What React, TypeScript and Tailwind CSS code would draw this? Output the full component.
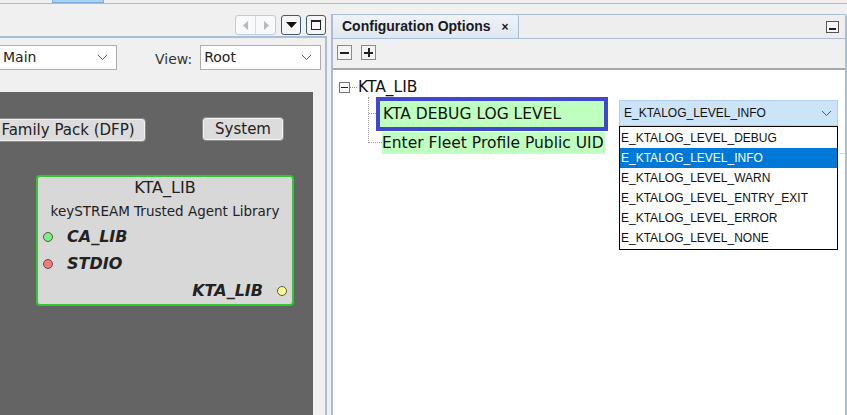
import React from "react";

const sans = { fontFamily: '"DejaVu Sans", Verdana, sans-serif' };
const swing = { fontFamily: '"Liberation Sans", Arial, sans-serif' };

function Chevron({ className = "" }: { className?: string }) {
  return (
    <svg width="11" height="7" viewBox="0 0 11 7" className={className}>
      <path d="M1 1 L5.5 5.5 L10 1" fill="none" stroke="#555" strokeWidth="1" />
    </svg>
  );
}

function Combo({ value, className }: { value: string; className: string }) {
  return (
    <div className={`flex h-[25px] items-center justify-between border border-[#adadad] bg-white pl-[3px] pr-[8px] text-[14px] text-[#222] ${className}`}>
      <span>{value}</span>
      <Chevron />
    </div>
  );
}

function Port({ color }: { color: string }) {
  return <span className={`inline-block h-[10px] w-[10px] rounded-full border border-[#555] ${color}`} />;
}

function CanvasButton({ label, className }: { label: string; className: string }) {
  return (
    <div className={`absolute flex h-[24px] items-center justify-center rounded-[4px] border border-[#8c8c8c] bg-[#dcdcdc] text-[15px] text-[#222] shadow-[inset_0_0_0_1px_#f2f2f2] ${className}`}>
      {label}
    </div>
  );
}

const levels = [
  "E_KTALOG_LEVEL_DEBUG",
  "E_KTALOG_LEVEL_INFO",
  "E_KTALOG_LEVEL_WARN",
  "E_KTALOG_LEVEL_ENTRY_EXIT",
  "E_KTALOG_LEVEL_ERROR",
  "E_KTALOG_LEVEL_NONE",
];

export default function App() {
  return (
    <div className="relative h-[415px] w-[847px] overflow-hidden bg-[#f0f0f0]" style={sans}>
      {/* top tab strip */}
      <div className="flex h-[4px] border-b border-[#b9b9b9]">
        <div className="ml-[52px] h-[3px] w-[52px] border-x border-b border-[#7aaee0] bg-[#a9d0f5]" />
      </div>

      <div className="flex h-[411px]">
        {/* left panel */}
        <div className="flex w-[327px] flex-col">
          <div className="flex h-[32px] items-end justify-end gap-[5px] pb-[1px] pr-[1px]">
            <div className="flex h-[20px] w-[41px] overflow-hidden rounded-[3px] border border-[#b9cde0] bg-[#f7f9fb]">
              <div className="flex flex-1 items-center justify-center border-r border-[#d4dde6]">
                <svg width="6" height="9" viewBox="0 0 6 9"><path d="M5 0 L0 4.5 L5 9 Z" fill="#b8b8b8" /></svg>
              </div>
              <div className="flex flex-1 items-center justify-center">
                <svg width="6" height="9" viewBox="0 0 6 9"><path d="M1 0 L6 4.5 L1 9 Z" fill="#b8b8b8" /></svg>
              </div>
            </div>
            <div className="flex h-[20px] w-[20px] items-center justify-center rounded-[3px] border border-[#3d5a78] bg-[#f4f6f8]">
              <svg width="11" height="6" viewBox="0 0 11 6"><path d="M0 0 H11 L5.5 6 Z" fill="#111" /></svg>
            </div>
            <div className="flex h-[20px] w-[20px] items-center justify-center rounded-[3px] border border-[#3d5a78] bg-[#f4f6f8]">
              <div className="h-[10px] w-[10px] border border-[#222] border-t-2" />
            </div>
          </div>
          <div className="flex flex-1 flex-col border-r-2 border-t-2 border-[#a9bed4]">
            <div className="flex h-[54px] items-start pt-[7px]">
              <Combo value="Main" className="ml-[-1px] w-[118px]" />
              <span className="ml-[38px] mt-[4px] text-[14px] text-[#333]">View:</span>
              <Combo value="Root" className="ml-[8px] w-[121px]" />
            </div>
            <div className="relative w-[313px] flex-1 bg-[#646464]">
              <CanvasButton label="Family Pack (DFP)" className="left-[-20px] top-[26px] w-[166px] pl-[10px]" />
              <CanvasButton label="System" className="left-[202px] top-[25px] w-[82px]" />

              <div className="absolute left-[36px] top-[83px] flex h-[131px] w-[258px] flex-col rounded-[4px] border-2 border-[#33c633] bg-[#d8d8d8] text-[#222]">
                <div className="flex h-[22px] items-center justify-center text-[16px]">KTA_LIB</div>
                <div className="flex h-[24px] items-center justify-center text-[13.5px]">keySTREAM Trusted Agent Library</div>
                <div className="flex h-[27px] items-center gap-[14px] pl-[5px]">
                  <Port color="bg-[#7ef07e]" />
                  <span className="text-[16px] font-bold italic">CA_LIB</span>
                </div>
                <div className="flex h-[27px] items-center gap-[14px] pl-[5px]">
                  <Port color="bg-[#f27a7a]" />
                  <span className="text-[16px] font-bold italic">STDIO</span>
                </div>
                <div className="flex h-[27px] items-center justify-end gap-[14px] pr-[5px]">
                  <span className="text-[16px] font-bold italic">KTA_LIB</span>
                  <Port color="bg-[#ffff8a]" />
                </div>
              </div>
            </div>
          </div>
        </div>

        {/* right panel */}
        <div className="ml-[4px] mt-[10px] flex flex-1 flex-col rounded-tr-[3px] border-x-2 border-t border-[#a9bed4]">
          <div className="flex h-[24px] items-stretch justify-between border-b border-[#a9bed4] bg-[#eeeeee]">
            <div className="flex w-[186px] items-center gap-[11px] rounded-tr-[3px] border-r border-[#a9bed4] bg-gradient-to-b from-[#eef3f9] to-[#dfe7f1] pl-[9px] text-[14px] font-bold text-[#1a1a1a]" style={swing}>
              <span>Configuration Options</span>
              <span className="text-[12px]">×</span>
            </div>
            <div className="flex items-center pr-[6px]">
              <div className="flex h-[12px] w-[13px] items-end justify-center border border-[#555] bg-[#f6f6f6] pb-[2px]">
                <div className="h-[2px] w-[7px] bg-[#222]" />
              </div>
            </div>
          </div>
          <div className="flex h-[31px] items-start gap-[9px] border-b-2 border-[#a8a8a8] pl-[4px] pt-[6px]">
            <div className="flex h-[15px] w-[15px] items-center justify-center border border-[#8a8a8a] bg-[#f4f4f4]">
              <div className="h-[2px] w-[9px] bg-[#222]" />
            </div>
            <div className="relative flex h-[15px] w-[15px] items-center justify-center border border-[#8a8a8a] bg-[#f4f4f4]">
              <div className="h-[2px] w-[9px] bg-[#222]" />
              <div className="absolute h-[9px] w-[2px] bg-[#222]" />
            </div>
          </div>

          {/* tree */}
          <div className="relative flex-1 bg-white pt-[9px] text-[15.5px] text-[#111]">
            <div className="flex h-[17px] items-center pl-[6px]">
              <div className="flex h-[11px] w-[11px] items-center justify-center border border-[#777]">
                <div className="h-[1px] w-[7px] bg-[#222]" />
              </div>
              <div className="w-[7px] border-t border-dotted border-[#888]" />
              <span className="ml-[1px]">KTA_LIB</span>
            </div>
            <div className="flex">
              <div className="ml-[35px] mt-[1px] h-[46px] w-[1px] border-l border-dotted border-[#999]" />
              <div className="flex flex-col">
                <div className="flex items-center">
                  <div className="w-[7px] border-t border-dotted border-[#999]" />
                  <div className="mt-[1px] h-[34px] w-[232px] border-4 border-[#3f48cc] bg-[#bfffbf] pl-[3px] leading-[26px]">
                    KTA DEBUG LOG LEVEL
                  </div>
                </div>
                <div className="flex items-center">
                  <div className="w-[13px] border-t border-dotted border-[#999]" />
                  <div className="mt-[1px] h-[22px] w-[223px] whitespace-nowrap bg-[#bfffbf] leading-[22px]">
                    Enter Fleet Profile Public UID
                  </div>
                </div>
              </div>
            </div>

            {/* combo + open list */}
            <div className="absolute left-[286px] top-[30px] w-[219px]" style={swing}>
              <div className="flex h-[26px] items-center justify-between border border-[#b5cfe8] bg-[#cce4f7] pl-[4px] pr-[5px] text-[12px] text-[#111]">
                <span>E_KTALOG_LEVEL_INFO</span>
                <Chevron />
              </div>
              <div className="border border-black bg-white py-[1px] text-[12px] text-[#111]">
                {levels.map((l) => (
                  <div
                    key={l}
                    className={`flex h-[20px] items-center pl-[1px] ${l === "E_KTALOG_LEVEL_INFO" ? "bg-[#0078d7] text-white" : ""}`}
                  >
                    {l}
                  </div>
                ))}
              </div>
            </div>
            <div className="absolute right-0 top-[83px] w-[6px] border-t border-[#d8d8d8]" />
          </div>
        </div>
      </div>
    </div>
  );
}
